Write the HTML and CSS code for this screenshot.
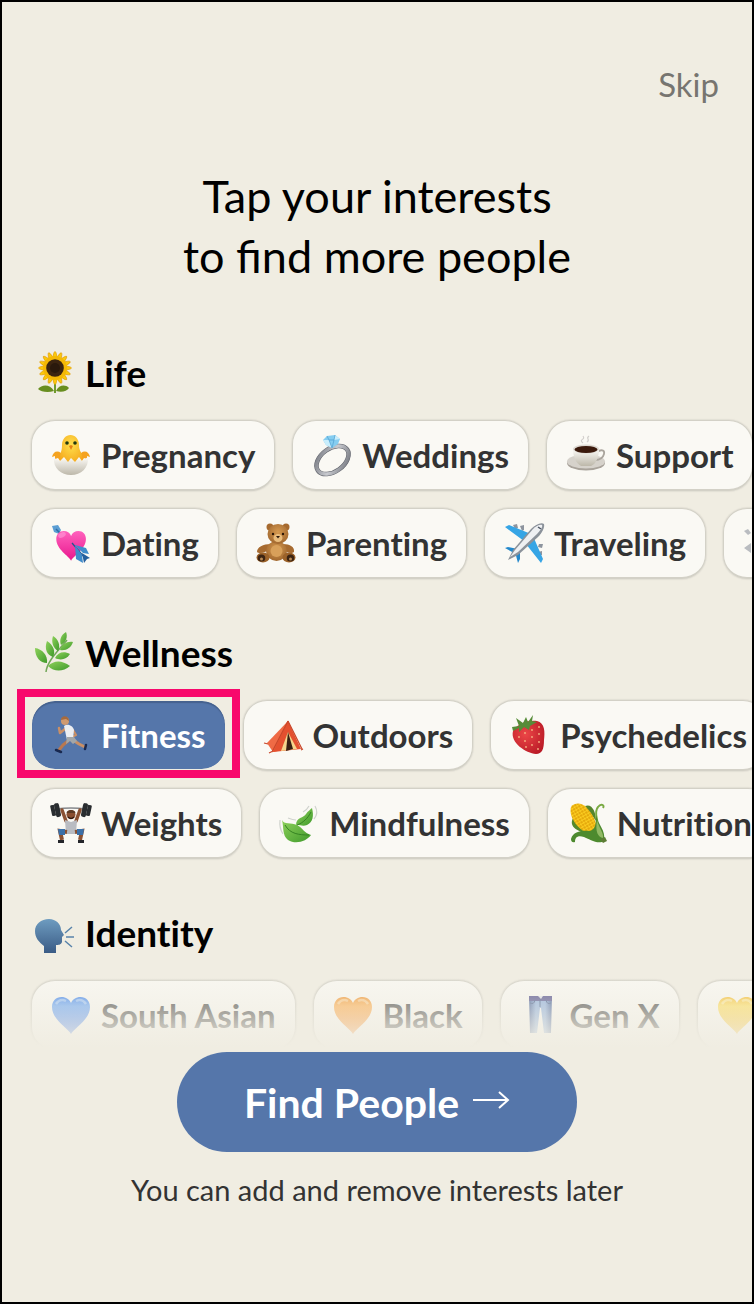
FILE: index.html
```html
<!DOCTYPE html>
<html lang="en">
<head>
    <meta charset="UTF-8">
    <meta name="viewport" content="width=device-width, initial-scale=1.0">
    <title>Interests</title>
    <link rel="stylesheet" href="styles.css">
</head>
<body>
    <!-- shared gradients and shapes -->
    <svg class="defs" aria-hidden="true">
        <defs>
            <linearGradient id="pink" x1="0" y1="0" x2="0" y2="1"><stop offset="0" stop-color="#ff62bd"/><stop offset="1" stop-color="#e8178d"/></linearGradient>
            <linearGradient id="blueHeart" x1="0" y1="0" x2="0" y2="1"><stop offset="0" stop-color="#2f7bf0"/><stop offset=".25" stop-color="#559bf8"/><stop offset="1" stop-color="#2467ee"/></linearGradient>
            <linearGradient id="orangeHeart" x1="0" y1="0" x2="0" y2="1"><stop offset="0" stop-color="#f08a1c"/><stop offset=".25" stop-color="#ffa53a"/><stop offset="1" stop-color="#f97e10"/></linearGradient>
            <linearGradient id="yellowHeart" x1="0" y1="0" x2="0" y2="1"><stop offset="0" stop-color="#f6b81c"/><stop offset=".25" stop-color="#ffdc4a"/><stop offset="1" stop-color="#f9b810"/></linearGradient>
            <linearGradient id="leaf" x1="0" y1="0" x2="1" y2="1"><stop offset="0" stop-color="#8ed15a"/><stop offset="1" stop-color="#3f9a2b"/></linearGradient>
            <linearGradient id="shell" x1="0" y1="0" x2="0" y2="1"><stop offset="0" stop-color="#fdfcf8"/><stop offset="1" stop-color="#bdb8aa"/></linearGradient>
            <linearGradient id="silver" x1="0" y1="0" x2="1" y2="1"><stop offset="0" stop-color="#71747c"/><stop offset=".5" stop-color="#c9cbd0"/><stop offset="1" stop-color="#6d7078"/></linearGradient>
            <linearGradient id="head" x1="0" y1="0" x2="0" y2="1"><stop offset="0" stop-color="#6e9cc0"/><stop offset="1" stop-color="#3a5b85"/></linearGradient>
            <linearGradient id="denim" x1="0" y1="0" x2="1" y2="0"><stop offset="0" stop-color="#2b4b8c"/><stop offset=".3" stop-color="#7fa6dc"/><stop offset=".7" stop-color="#7fa6dc"/><stop offset="1" stop-color="#2b4b8c"/></linearGradient>
            <radialGradient id="chick" cx=".5" cy=".35" r=".7"><stop offset="0" stop-color="#ffe04d"/><stop offset="1" stop-color="#f5a81c"/></radialGradient>
            <radialGradient id="fur" cx=".5" cy=".4" r=".7"><stop offset="0" stop-color="#d69a50"/><stop offset="1" stop-color="#99602a"/></radialGradient>
            <radialGradient id="berry" cx=".4" cy=".4" r=".7"><stop offset="0" stop-color="#ec4647"/><stop offset="1" stop-color="#b91a26"/></radialGradient>
            <pattern id="kernels" width="3" height="3" patternUnits="userSpaceOnUse" patternTransform="rotate(-30)"><rect width="3" height="3" fill="#d99500"/><circle cx="1.5" cy="1.5" r="1.3" fill="#ffd425"/></pattern>
            <path id="heart" d="M20 39C17 33 1 25 1 12C1 6 5 2 10.500 2C15 2 18.500 4.500 20 8C21.500 4.500 25 2 29.500 2C35 2 39 6 39 12C39 25 23 33 20 39Z"/>
        </defs>
    </svg>

    <div class="screen">
        <header class="top">
            <button type="button" class="skip">Skip</button>
            <h1>Tap your interests<br>to find more people</h1>
        </header>

        <main class="interests">
            <section class="group">
                <h2>
                    <svg class="icon" viewBox="0 0 40 40" aria-hidden="true">
                        <path d="M20 29h2v12h-2z" fill="#6f9a2c"/>
                        <path d="M20 39C14 41 7 40 4 37C8 32 16 32 20 39ZM22 39C28 41 33 39 35 36C31 32 25 33 22 39Z" fill="#688e20"/>
                        <g fill="#fbc90c" stroke="#dd9503" stroke-width=".6">
                            <ellipse cx="21" cy="16" rx="2.800" ry="16.500"/>
                            <ellipse cx="21" cy="16" rx="2.800" ry="16.500" transform="rotate(22.500 21 16)"/>
                            <ellipse cx="21" cy="16" rx="2.800" ry="16.500" transform="rotate(45 21 16)"/>
                            <ellipse cx="21" cy="16" rx="2.800" ry="16.500" transform="rotate(67.500 21 16)"/>
                            <ellipse cx="21" cy="16" rx="2.800" ry="16.500" transform="rotate(90 21 16)"/>
                            <ellipse cx="21" cy="16" rx="2.800" ry="16.500" transform="rotate(112.500 21 16)"/>
                            <ellipse cx="21" cy="16" rx="2.800" ry="16.500" transform="rotate(135 21 16)"/>
                            <ellipse cx="21" cy="16" rx="2.800" ry="16.500" transform="rotate(157.500 21 16)"/>
                        </g>
                        <circle cx="21" cy="16" r="12" fill="#f4b806"/>
                        <circle cx="21" cy="16" r="8.800" fill="#3b2410"/>
                        <circle cx="21" cy="16" r="5" fill="#2a190c"/>
                    </svg>
                    Life
                </h2>
                <div class="row">
                    <button type="button" class="chip">
                        <svg class="icon" viewBox="0 0 40 40" aria-hidden="true">
                            <path d="M10 18C6 15 2 17 1 22L4 21L4 24L7 23L9 26H31L33 23L36 24V21L39 22C38 17 34 15 30 18L27 14H13Z" fill="#f5a31f"/>
                            <path d="M11 10C11 4 15 0 19.500 0C24 0 28 4 28 10C28 15 30 17 31 20V28H9V20C10 17 11 15 11 10Z" fill="url(#chick)"/>
                            <path d="M3 23L9 26L13 22L17 27L20 23L24 27L28 22L31 26L37 22C38 33 30 40 20 40C10 40 2 33 3 23Z" fill="url(#shell)"/>
                            <circle cx="16" cy="8" r="1.800" fill="#20380f"/><circle cx="24" cy="8" r="1.800" fill="#20380f"/>
                            <path d="M18 11L20 10L22 11L20 15Z" fill="#e57f12"/>
                        </svg>
                        Pregnancy
                    </button>
                    <button type="button" class="chip">
                        <svg class="icon" viewBox="0 0 40 40" aria-hidden="true">
                            <ellipse cx="20.500" cy="25" rx="18" ry="11.500" transform="rotate(-36 20.500 25)" fill="none" stroke="#5f626a" stroke-width="4.500"/>
                            <ellipse cx="20.500" cy="25" rx="18" ry="11.500" transform="rotate(-36 20.500 25)" fill="none" stroke="url(#silver)" stroke-width="3.500"/>
                            <path d="M11 5L15 1L23 0L28 4L26 9L20 13L14 10Z" fill="#85cdf0"/>
                            <path d="M11 5L17 5L20 13L14 10ZM23 0L22 5L28 4Z" fill="#c9eefc"/>
                            <path d="M15 1L17 5H22L23 0M17 5L20 13L22 5" fill="none" stroke="#4f9fd0" stroke-width=".7"/>
                        </svg>
                        Weddings
                    </button>
                    <button type="button" class="chip">
                        <svg class="icon" viewBox="0 0 40 40" aria-hidden="true">
                            <ellipse cx="20" cy="28" rx="19" ry="7.500" fill="#a9a39b"/>
                            <ellipse cx="20" cy="26.500" rx="19" ry="7" fill="#d6d2cb"/>
                            <path d="M31 17C35 14 39 15 38 19C37 23 33 25 29 25" fill="none" stroke="#aaa59d" stroke-width="1.800"/>
                            <path d="M7 14H33C33 22 30 29 25 31H15C10 28 7 22 7 14Z" fill="url(#shell)"/>
                            <ellipse cx="20" cy="14" rx="13" ry="4.500" fill="#dedad3"/>
                            <ellipse cx="20" cy="14.500" rx="11.500" ry="3.500" fill="#3b1a0c"/>
                            <path d="M17 8C12 4 20 5 17 1M21 7C25 4 19 4 23 1" fill="none" stroke="#d2cfcc" stroke-width="1.200"/>
                        </svg>
                        Support
                    </button>
                </div>
                <div class="row">
                    <button type="button" class="chip">
                        <svg class="icon" viewBox="0 0 40 40" aria-hidden="true">
                            <path d="M1 3L7 2L10 7L8 11L3 9Z" fill="#5b9ed3"/>
                            <path d="M5 6L10 11" stroke="#2e6ca5" stroke-width="1.500"/>
                            <use href="#heart" transform="translate(4.500 6.500) scale(.78 .8)" fill="url(#pink)"/>
                            <ellipse cx="11" cy="12" rx="4" ry="2.500" transform="rotate(-25 11 12)" fill="#ff9bd8" opacity=".6"/>
                            <path d="M21 20L34 35" stroke="#24558f" stroke-width="1.300"/>
                            <path d="M24 22L35 25L38 31L32 30ZM24 22L25 36L32 40L31 32Z" fill="#3f8ccb"/>
                            <path d="M31 30L39 35L36 36L33 40Z" fill="#245f9d"/>
                        </svg>
                        Dating
                    </button>
                    <button type="button" class="chip">
                        <svg class="icon" viewBox="0 0 40 40" aria-hidden="true">
                            <path d="M15 21C7 21 1 24 1 29C4 32 10 28 15 27ZM27 21C34 21 39 24 38 29C35 32 30 28 26 27Z" fill="#a76b30"/>
                            <ellipse cx="20.500" cy="28" rx="10.500" ry="10" fill="url(#fur)"/>
                            <circle cx="14" cy="4" r="3.500" fill="#a66a2e"/><circle cx="30" cy="4" r="3.500" fill="#a66a2e"/>
                            <ellipse cx="22" cy="11" rx="10.500" ry="10" fill="url(#fur)"/>
                            <ellipse cx="22" cy="15" rx="4.500" ry="4" fill="#e9bc7c"/>
                            <circle cx="17" cy="11" r="1.200" fill="#2c1709"/><circle cx="27" cy="11" r="1.200" fill="#2c1709"/>
                            <path d="M20 13H24L22 15.500Z" fill="#2c1709"/>
                            <ellipse cx="20.500" cy="28" rx="6" ry="6" fill="#d8a05a"/>
                            <ellipse cx="7" cy="34.500" rx="6.500" ry="5" fill="#9c6229"/><ellipse cx="33" cy="34.500" rx="6.500" ry="5" fill="#9c6229"/>
                            <ellipse cx="5.500" cy="35" rx="3.800" ry="3.500" fill="#3d2412"/><ellipse cx="34.500" cy="35" rx="3.800" ry="3.500" fill="#3d2412"/>
                            <circle cx="5.500" cy="36" r="1.500" fill="#b98a54"/><circle cx="34.500" cy="36" r="1.500" fill="#b98a54"/>
                        </svg>
                        Parenting
                    </button>
                    <button type="button" class="chip">
                        <svg class="icon" viewBox="0 0 40 40" aria-hidden="true">
                            <path d="M9 2L13 1L14 5L11 6ZM16 3L20 2L20 7L18 8ZM35 21L39 21L38 25L34 24ZM34 29L38 28L38 32L34 33Z" fill="#8d949e"/>
                            <path d="M1 4L5 2L27 11L20 18ZM29 13L39 36L37 40L22 21Z" fill="#36a5e5"/>
                            <path d="M1 25L4 24L14 26L10 30ZM11 29L16 27L16 36L14 40Z" fill="#2388cb"/>
                            <path d="M4 37L9 27L27 6C31 2 37 -1 40 1C41 4 38 10 34 14L14 32Z" fill="#8b929a"/>
                            <path d="M6 34L11 27L29 6C32 3 36 1 38 2C39 4 36 8 33 11L14 29Z" fill="#eef0f2"/>
                            <path d="M34 4L37 6" stroke="#4b5562" stroke-width="1.500"/>
                        </svg>
                        Traveling
                    </button>
                    <button type="button" class="chip" aria-label="Moving">
                        <svg class="icon" viewBox="0 0 40 40" aria-hidden="true">
                            <path d="M1 8L5 6L8 10L5 12ZM1 25L8 20V30Z" fill="#b9bcc0"/>
                        </svg>
                    </button>
                </div>
            </section>

            <section class="group">
                <h2>
                    <svg class="icon" viewBox="0 0 40 40" aria-hidden="true">
                        <path d="M12 40C13 29 25 18 33 8" fill="none" stroke="#73a75a" stroke-width="1.500"/>
                        <g fill="url(#leaf)">
                            <path d="M13 31C6 31 1 25 1 16C8 17 14 23 13 31Z"/>
                            <path d="M19 25C13 23 10 17 13 9C19 13 22 19 19 25Z"/>
                            <path d="M24 19C19 16 17 10 19 4C24 7 27 13 24 19Z"/>
                            <path d="M27 13C25 8 27 3 32 0C34 5 32 10 27 13Z"/>
                            <path d="M26 18C28 12 33 9 39 10C37 16 32 19 26 18Z"/>
                            <path d="M21 26C24 20 30 19 36 22C33 27 27 29 21 26Z"/>
                            <path d="M14 34C20 28 28 28 36 34C29 40 20 40 14 34Z"/>
                        </g>
                    </svg>
                    Wellness
                </h2>
                <div class="row">
                    <button type="button" class="chip selected" aria-pressed="true">
                        <svg class="icon" viewBox="0 0 40 40" aria-hidden="true">
                            <g fill="none" stroke-linecap="round" stroke-linejoin="round">
                                <path d="M14 14L9 18L8 13" stroke="#c98f66" stroke-width="2.500"/>
                                <path d="M17 26L12 30L8 35" stroke="#b87850" stroke-width="3"/>
                                <path d="M22 25L28 29L34 32" stroke="#c98f66" stroke-width="3"/>
                                <path d="M22 15L25 20L21 22" stroke="#c98f66" stroke-width="2.200"/>
                                <path d="M5 35L10 37M34 34L35 30" stroke="#18284f" stroke-width="2.500"/>
                            </g>
                            <path d="M13 11C17 8 22 11 23 15L22 24L16 25Z" fill="#eceef2"/>
                            <path d="M16 22L23 22L26 26L22 29L19 26L15 29Z" fill="#a3a6a8"/>
                            <circle cx="14" cy="6" r="4" fill="#d09a70"/>
                            <path d="M10 5C10 0 18 0 18 6L15 4Z" fill="#a56a3d"/>
                        </svg>
                        Fitness
                    </button>
                    <button type="button" class="chip">
                        <svg class="icon" viewBox="0 0 40 40" aria-hidden="true">
                            <path d="M25 6L4 28L10 37L20 35Z" fill="#ef6a45"/>
                            <path d="M25 6L10 37L38 34Z" fill="#e4502f"/>
                            <path d="M25 17L18 36L34 34Z" fill="#f6d58c"/>
                            <path d="M25 17L23 36L30 34Z" fill="#382013"/>
                            <path d="M25 6L9 37M1 28L5 29M6 38L10 36M38 35L40 34M25 6L39 34" fill="none" stroke="#c9472a" stroke-width="1.200"/>
                        </svg>
                        Outdoors
                    </button>
                    <button type="button" class="chip">
                        <svg class="icon" viewBox="0 0 40 40" aria-hidden="true">
                            <path d="M3 16C8 8 18 5 27 6C35 8 35 17 34 25C34 34 32 39 26 39C16 38 0 28 3 16Z" fill="url(#berry)"/>
                            <path d="M2 12L9 11L6 3L13 8L16 2L18 7L23 0L22 6L27 7L20 11L19 15L14 12L9 17L9 13L3 16Z" fill="#568c38"/>
                            <g fill="#f5b282">
                                <circle cx="9" cy="22" r=".9"/><circle cx="15" cy="18" r=".9"/><circle cx="22" cy="15" r=".9"/><circle cx="29" cy="12" r=".9"/>
                                <circle cx="15" cy="26" r=".9"/><circle cx="22" cy="22" r=".9"/><circle cx="29" cy="19" r=".9"/><circle cx="22" cy="30" r=".9"/>
                                <circle cx="29" cy="27" r=".9"/><circle cx="28" cy="34" r=".9"/><circle cx="16" cy="32" r=".9"/>
                            </g>
                        </svg>
                        Psychedelics
                    </button>
                </div>
                <div class="row">
                    <button type="button" class="chip">
                        <svg class="icon" viewBox="0 0 40 40" aria-hidden="true">
                            <path d="M5 6Q20 4 35 6" fill="none" stroke="#85888c" stroke-width="1.500"/>
                            <path d="M11 7L15 18M29 7L25 18" stroke="#8b5132" stroke-width="3.500" stroke-linecap="round"/>
                            <path d="M14 17L20 19L26 17L25 31H15Z" fill="#b9bcc2"/>
                            <circle cx="20" cy="11.500" r="4.500" fill="#8a4f30"/>
                            <path d="M15.500 10C16 6 24 6 24.500 10Z" fill="#5d3a24"/>
                            <path d="M17 14Q20 17 23 14" stroke="#32190e" stroke-width="1.500" fill="none"/>
                            <path d="M16 29L9 28L11 37M24 29L31 28L29 37" fill="none" stroke="#8b5132" stroke-width="4"/>
                            <path d="M7 26H14V32H8ZM26 26H33L32 32H26Z" fill="#3b70a8"/>
                            <path d="M7 37H13V40H7ZM27 37H33V40H27Z" fill="#24262b"/>
                            <g fill="#292d30">
                                <rect x="0" y="2" width="4" height="11" rx="1" transform="rotate(-12 2 7)"/><rect x="4" y="0" width="5" height="14" rx="2" transform="rotate(-12 7 7)"/>
                                <rect x="36" y="2" width="4" height="11" rx="1" transform="rotate(12 38 7)"/><rect x="31" y="0" width="5" height="14" rx="2" transform="rotate(12 33 7)"/>
                            </g>
                        </svg>
                        Weights
                    </button>
                    <button type="button" class="chip">
                        <svg class="icon" viewBox="0 0 40 40" aria-hidden="true">
                            <path d="M3 17C5 22 12 19 18 22C24 25 25 30 32 32C28 38 17 42 9 37C3 32 5 25 3 17Z" fill="url(#leaf)"/>
                            <path d="M17 22C17 14 25 15 27 11C29 8 31 7 33 5C35 13 34 19 28 22C23 24 20 21 17 22Z" fill="url(#leaf)"/>
                            <path d="M6 22C11 31 20 32 30 32M18 22C24 20 29 15 32 9" fill="none" stroke="#358322" stroke-width="1"/>
                            <path d="M1 17Q0 25 4 31M36 3Q40 10 35 16M9 15Q14 17 17 17M24 9Q28 7 30 3" fill="none" stroke="#d0d3ce" stroke-width="1.200"/>
                        </svg>
                        Mindfulness
                    </button>
                    <button type="button" class="chip">
                        <svg class="icon" viewBox="0 0 40 40" aria-hidden="true">
                            <path d="M6 15C1 25 13 28 19 31L15 22Z" fill="#558a2b"/>
                            <path d="M18 3C25 0 29 9 29 18Z" fill="#55852d"/>
                            <path d="M4 4C8 -1 15 0 19 4C26 11 30 20 30 27L24 32C14 29 1 16 4 4Z" fill="url(#kernels)"/>
                            <path d="M36 5C38 2 34 0 31 4C26 10 32 17 30 22" fill="none" stroke="#79aa42" stroke-width="2"/>
                            <path d="M29 12C31 22 39 27 37 38C31 42 22 36 17 34C11 32 8 34 8 39C5 40 4 38 4 36C6 28 16 27 23 28C29 26 29 20 29 12Z" fill="#4d8a2e"/>
                            <path d="M30 17C32 25 37 30 36 35C31 34 28 29 30 17Z" fill="#91b963"/>
                            <path d="M33 36L38 34L40 38L36 40Z" fill="#5d7d34"/>
                        </svg>
                        Nutrition
                    </button>
                </div>
            </section>

            <section class="group">
                <h2>
                    <svg class="icon" viewBox="0 0 40 40" aria-hidden="true">
                        <path d="M10 41V34C5 30 1 26 1 19C1 12 7 7 15 7C22 7 27 12 27 18L30 23L28 25V30C27 33 24 33 22 33V41Z" fill="url(#head)"/>
                        <path d="M31 21L38 15M32 25H40M31 29L38 35" stroke="#5883aa" stroke-width="1.500"/>
                    </svg>
                    Identity
                </h2>
                <div class="row">
                    <button type="button" class="chip">
                        <svg class="icon" viewBox="0 0 40 40" aria-hidden="true"><use href="#heart" fill="url(#blueHeart)"/><path d="M5 9Q9 3 15 6M25 6Q31 3 35 9" fill="none" stroke="#b5d7ff" stroke-width="2.500" opacity=".6"/></svg>
                        South Asian
                    </button>
                    <button type="button" class="chip">
                        <svg class="icon" viewBox="0 0 40 40" aria-hidden="true"><use href="#heart" fill="url(#orangeHeart)"/><path d="M5 9Q9 3 15 6M25 6Q31 3 35 9" fill="none" stroke="#ffe0ae" stroke-width="2.500" opacity=".6"/></svg>
                        Black
                    </button>
                    <button type="button" class="chip">
                        <svg class="icon" viewBox="0 0 40 40" aria-hidden="true">
                            <path d="M9 1H32L31 38H24L21 13H20L17 38H10Z" fill="url(#denim)"/>
                            <path d="M9 1H32V6H9Z" fill="#403e83"/>
                            <path d="M18 1H23L21 4Z" fill="#e0e2eb"/>
                            <path d="M20 4V12M10 8Q14 10 15 5M31 8Q27 10 26 5" fill="none" stroke="#29467d" stroke-width="1"/>
                        </svg>
                        Gen X
                    </button>
                    <button type="button" class="chip" aria-label="East Asian">
                        <svg class="icon" viewBox="0 0 40 40" aria-hidden="true"><use href="#heart" fill="url(#yellowHeart)"/><path d="M5 9Q9 3 15 6M25 6Q31 3 35 9" fill="none" stroke="#fff4b5" stroke-width="2.500" opacity=".6"/></svg>
                    </button>
                </div>
            </section>
        </main>

        <footer class="bottom">
            <button type="button" class="find">
                Find People
                <svg class="arrow" viewBox="0 0 38 24" aria-hidden="true"><path d="M1 10H36M27 2L36 10L27 18" fill="none" stroke="#fff" stroke-width="2"/></svg>
            </button>
            <p>You can add and remove interests later</p>
        </footer>
    </div>
</body>
</html>
```
FILE: styles.css
```css
* {
    box-sizing: border-box;
}

body {
    margin: 0;
    background-color: #f0ede2;
    font-family: Lato, "Open Sans", sans-serif;
    color: #000;
}

button {
    font-family: inherit;
    border: none;
    cursor: pointer;
    white-space: nowrap;
}

.defs {
    position: absolute;
    width: 0;
    height: 0;
}

.screen {
    display: flex;
    flex-direction: column;
    height: 100vh;
    border: 2px solid black;
    overflow: hidden;
}

.top {
    display: flex;
    flex-direction: column;
    padding: 58px 33px 0;
}

.skip {
    align-self: flex-end;
    padding: 0;
    background: none;
    color: #777570;
    font-size: 33px;
    line-height: 48px;
}

h1 {
    margin: 58px 0 0;
    font-size: 45px;
    font-weight: 400;
    line-height: 60px;
    text-align: center;
}

/* list of chips, fades out above the footer */
.interests {
    position: relative;
    flex: 1;
    min-height: 0;
    padding: 58px 0 0 29px;
    overflow: hidden;
}

.interests::after {
    content: "";
    position: absolute;
    left: 0;
    right: 0;
    bottom: 0;
    height: 96px;
    background: linear-gradient(rgba(240, 237, 226, 0), #f0ede2 95%);
    pointer-events: none;
}

.group {
    margin-bottom: 45px;
}

.icon {
    flex: none;
    width: 40px;
    height: 40px;
    overflow: visible;
}

h2 {
    display: flex;
    align-items: center;
    gap: 11px;
    height: 56px;
    margin: 0 0 20px;
    padding-left: 3px;
    font-size: 37px;
    font-weight: 700;
    font-variant-ligatures: none;
}

.row {
    display: flex;
    gap: 17px;
    margin-bottom: 17px;
}

.chip {
    position: relative;
    flex: none;
    display: flex;
    align-items: center;
    gap: 10px;
    height: 71px;
    padding: 0 19px 1px;
    border: 1px solid #d3d1c7;
    border-bottom-width: 2px;
    border-radius: 24px;
    background-color: #faf9f4;
    box-shadow: 0 0 1px 1px #e2dfd5;
    color: #333;
    font-size: 33px;
    font-weight: 700;
    font-variant-ligatures: none;
}

.selected {
    border-color: #f0ede2;
    background-color: #5576aa;
    background-clip: padding-box;
    box-shadow: inset 0 2px 1px #46628e;
    color: #fff;
}

.selected::after {
    content: "";
    position: absolute;
    inset: -12px -15px -9px;
    border: 8px solid #f8086c;
}

.bottom {
    display: flex;
    flex-direction: column;
    align-items: center;
    height: 250px;
}

.find {
    display: flex;
    align-items: center;
    justify-content: center;
    gap: 13px;
    height: 100px;
    padding: 0 67px;
    border-radius: 50px;
    background-color: #5576aa;
    color: #fff;
    font-size: 41px;
    font-weight: 700;
}

.arrow {
    width: 38px;
    height: 24px;
}

.bottom p {
    margin: 18px 0 0;
    color: #333;
    font-size: 29px;
    line-height: 40px;
}
```
